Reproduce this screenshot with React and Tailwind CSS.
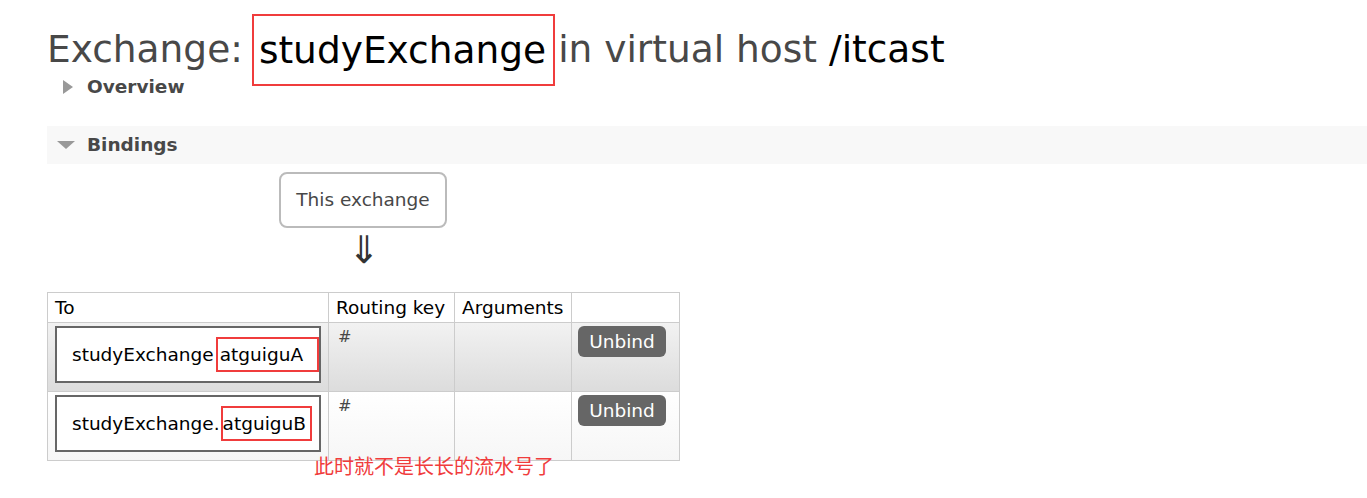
import React from "react";

const font = { fontFamily: '"DejaVu Sans", Verdana, "Noto Sans CJK SC", sans-serif' };

const bindings = [
  { prefix: "studyExchange", dest: "atguiguA", row: "bg-gradient-to-b from-[#f2f2f2] to-[#dcdcdc]", hl: "ml-[2px] w-[103px] pl-[2px]" },
  { prefix: "studyExchange.", dest: "atguiguB", row: "bg-gradient-to-b from-white to-[#f6f6f6]", hl: "ml-[1px] w-[91px]" },
];

const App = () => {
  return (
    <div className="h-[498px] w-[1367px] overflow-hidden bg-white pl-[47px] pt-[14px] font-['DejaVu_Sans',Verdana,sans-serif] text-[#484848]">
      {/* title */}
      <h1 className="flex h-[72px] items-center text-[37.5px] leading-none">
        <span className="mr-[9px]">Exchange:</span>
        <span className="flex h-[72px] items-center border-2 border-[#f03c3c] pl-[5px] pr-[7px] pt-[1px] text-black">studyExchange</span>
        <span className="ml-[3px]">in virtual host</span>
        <span className="ml-[12px] text-black">/itcast</span>
      </h1>

      {/* overview */}
      <div className="-mt-[8px] flex h-[18px] items-center">
        <span className="ml-[16px] h-0 w-0 border-y-[7px] border-l-[10px] border-y-transparent border-l-[#999]" />
        <span className="ml-[14px] text-[18.5px] font-bold">Overview</span>
      </div>

      {/* bindings section */}
      <div className="mt-[30px] flex h-[38px] items-center bg-[#f8f8f8]">
        <span className="ml-[10px] h-0 w-0 border-x-[9px] border-t-[8px] border-x-transparent border-t-[#999]" />
        <span className="ml-[12px] text-[18.5px] font-bold">Bindings</span>
      </div>

      <div className="ml-[232px] mt-[8px] flex h-[56px] w-[168px] items-center justify-center rounded-[8px] border-2 border-[#bbb] text-[18.5px] text-[#484848]">
        This exchange
      </div>
      <div className="ml-[306px] mt-[6px] flex h-[32px] w-[22px] items-center justify-center text-[38px] leading-none text-[#333]">⇓</div>

      <table className="mt-[26px] w-[633px] table-fixed border-collapse text-[18.5px] text-black" style={font}>
        <thead>
          <tr className="h-[30px] text-left">
            <th className="w-[281px] border border-[#ccc] px-[7px] font-normal">To</th>
            <th className="w-[126px] border border-[#ccc] px-[7px] font-normal">Routing key</th>
            <th className="w-[117px] border border-[#ccc] px-[7px] font-normal">Arguments</th>
            <th className="border border-[#ccc] px-[7px] font-normal"></th>
          </tr>
        </thead>
        <tbody>
          {bindings.map((b) => (
            <tr key={b.dest} className={`h-[69px] ${b.row}`}>
              <td className="border border-[#ccc] px-[7px] py-[3px] align-top">
                <div className="flex h-[57px] items-center whitespace-nowrap border-2 border-[#666] bg-white pl-[15px]">
                  <span>{b.prefix}</span>
                  <span className={`flex h-[35px] items-center border-2 border-[#f03c3c] ${b.hl}`}>{b.dest}</span>
                </div>
              </td>
              <td className="border border-[#ccc] px-[9px] pt-[6px] align-top text-[16px] leading-none text-[#484848]">#</td>
              <td className="border border-[#ccc]"></td>
              <td className="border border-[#ccc] px-[6px] pt-[3px] align-top">
                <button className="h-[31px] w-[88px] rounded-[6px] bg-[#666] text-[18.5px] text-white">Unbind</button>
              </td>
            </tr>
          ))}
        </tbody>
      </table>
      <div className="-mt-[7px] ml-[267px] text-[20px] leading-[24px] text-[#f03c3c]" style={{ fontFamily: '"Noto Sans CJK SC", sans-serif' }}>
        此时就不是长长的流水号了
      </div>
    </div>
  );
};

export default App;
